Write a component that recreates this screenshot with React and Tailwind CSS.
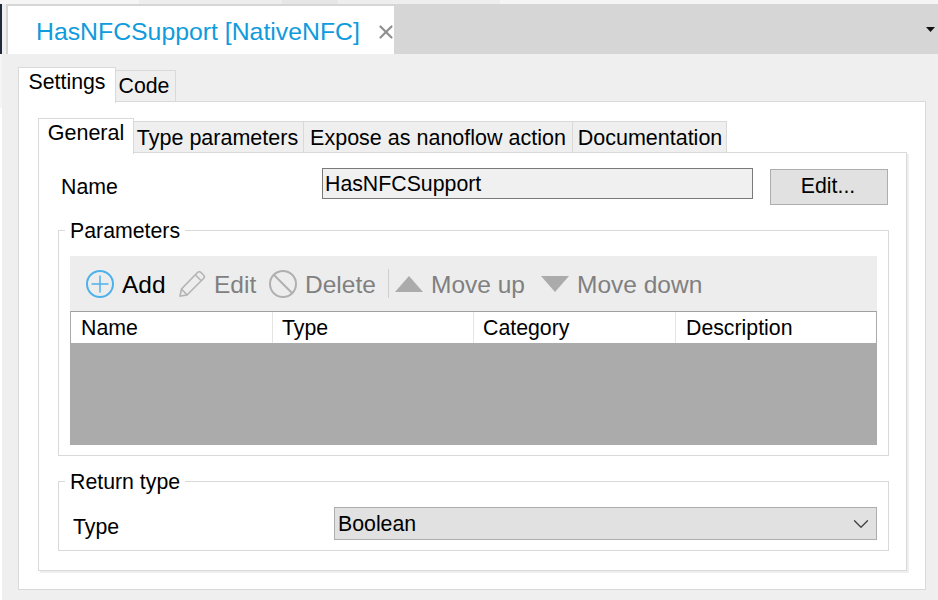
import React from 'react';
import { ChevronDown, X } from 'lucide-react';

const font = 'font-["Liberation_Sans",sans-serif]';

const innerTabs = [
  { label: 'Type parameters', w: 'w-[170px]', shift: 'pr-[2px]' },
  { label: 'Expose as nanoflow action', w: 'w-[269px]', shift: '' },
  { label: 'Documentation', w: 'w-[154px]', shift: 'pl-[1px]' },
];

const columns = [
  { label: 'Name', w: 'w-[202px]', pad: 'pl-[10px]' },
  { label: 'Type', w: 'w-[201px]', pad: 'pl-[9px]' },
  { label: 'Category', w: 'w-[202px]', pad: 'pl-[9px]' },
  { label: 'Description', w: 'flex-1', pad: 'pl-[10px]' },
];

const Tool = ({ icon, label, className = 'text-[#808080]' }) => (
  <div className={`flex items-center gap-[8px] ${className}`}>
    {icon}
    <span className="whitespace-nowrap pt-[3px]">{label}</span>
  </div>
);

const App = () => {
  return (
    <div className={`w-[938px] h-[600px] overflow-hidden bg-[#efefef] text-black ${font}`}>
      <div className="h-[4px] flex">
        <div className="w-[139px] bg-[#f5f5f5]" />
        <div className="w-[143px] bg-[#eeeeee]" />
        <div className="w-[56px] bg-[#e6e6e6]" />
        <div className="w-[162px] bg-[#eeeeee]" />
        <div className="flex-1 bg-[#f5f5f5]" />
      </div>

      {/* document tab strip */}
      <div className="h-[50px] flex bg-[#d6d6d6]">
        <div className="w-[2px] bg-[#1f2a3c]" />
        <div className="w-[4px] bg-[#f0f0f0]" />
        <div className="w-[2px]" />
        <div className="w-[386px] mt-[2px] bg-white flex items-center pl-[28px] pt-[3px] text-[#0f9bdc] text-[24.8px]">
          <span className="w-[324px] shrink-0 whitespace-nowrap">HasNFCSupport [NativeNFC]</span>
          <X className="ml-[15px] w-[22px] h-[22px] shrink-0 text-[#8f8f8f]" strokeWidth={2.4} />
        </div>
        <div className="flex-1 flex items-center justify-end pr-[3px]">
          <svg width="9" height="5" viewBox="0 0 9 5">
            <path d="M0 0h9L4.5 5z" fill="#111" />
          </svg>
        </div>
      </div>

      <div className="flex h-[546px]">
        <div className="w-[2px] flex flex-col">
          <div className="h-[54px] bg-[#f5f5f5]" />
          <div className="flex-1 bg-white" />
        </div>

        <div className="pl-[16px] pt-[12px]">
          {/* outer tabs */}
          <div className="flex items-end h-[36px] text-[21.3px]">
            <div className="w-[98px] h-[36px] bg-white border border-b-0 border-[#d9d9d9] relative z-10 -mb-px flex items-center justify-center pb-[6px]">
              Settings
            </div>
            <div className="w-[60px] h-[32px] bg-[#efefef] border border-l-0 border-[#d9d9d9] flex items-center justify-center pr-[3px] pt-[2px]">
              Code
            </div>
          </div>

          <div className="w-[908px] h-[489px] -mt-px bg-white border border-[#d9d9d9] pl-[19px] pt-[15px]">
            {/* inner tabs */}
            <div className="flex items-end h-[36px] text-[21.5px]">
              <div className="w-[96px] h-[36px] bg-white border border-b-0 border-[#d9d9d9] relative z-10 -mb-px flex items-center justify-center pb-[6px]">
                General
              </div>
              {innerTabs.map((tab) => (
                <div
                  key={tab.label}
                  className={`${tab.w} ${tab.shift} h-[32px] bg-[#efefef] border border-l-0 border-[#d9d9d9] flex items-center justify-center whitespace-nowrap pt-[2px]`}
                >
                  {tab.label}
                </div>
              ))}
            </div>

            <div className="w-[869px] h-[419px] -mt-px bg-white border border-[#d9d9d9] shadow-[2px_2px_0_#efefef] pl-[19px] pt-[15px] text-[21.3px]">
              {/* name row */}
              <div className="flex items-start h-[37px]">
                <div className="w-[264px] pl-[3px] pt-[4px]">Name</div>
                <div className="w-[431px] h-[31px] bg-[#f0f0f0] border border-[#7a7a7a] pl-[2px] pt-[2px] flex items-center">
                  HasNFCSupport
                </div>
                <div className="ml-[17px] mt-px w-[118px] h-[36px] bg-[#e1e1e1] border border-[#adadad] flex items-center justify-center pr-[2px]">
                  Edit...
                </div>
              </div>

              {/* parameters */}
              <fieldset className="w-[831px] h-[237px] mt-[14px] border border-[#d9d9d9] px-[11px]">
                <legend className="-ml-[5px] px-[5px] h-[22px] leading-[24px]">Parameters</legend>
                <div className="h-[55px] mt-[15px] bg-[#ededed] flex items-center pl-[16px] text-[24.5px]">
                  <div className="w-[92px]">
                    <Tool
                      className="text-black"
                      label="Add"
                      icon={
                        <svg width="28" height="28" viewBox="0 0 28 28" fill="none" stroke="#4db2ec" strokeWidth="2">
                          <circle cx="14" cy="14" r="13" />
                          <path d="M14 5.5v17M5.5 14h17" strokeWidth="1.5" />
                        </svg>
                      }
                    />
                  </div>
                  <div className="w-[91px]">
                    <Tool
                      label="Edit"
                      icon={
                        <svg width="28" height="28" viewBox="0 0 28 28" fill="none" stroke="#b4b4b4" strokeWidth="1.6">
                          <path d="M2 26l1.5-7L19.5 2.5c1-1 2.5-1 3.5 0l2.5 2.5c1 1 1 2.5 0 3.5L9 25z" />
                          <path d="M3.5 19L9 25M17.5 5l5.5 5.5" />
                        </svg>
                      }
                    />
                  </div>
                  <div className="w-[119px]">
                    <Tool
                      label="Delete"
                      icon={
                        <svg width="28" height="28" viewBox="0 0 28 28" fill="none" stroke="#b0b0b0" strokeWidth="2">
                          <circle cx="14" cy="14" r="13" />
                          <path d="M5 5l18 18" />
                        </svg>
                      }
                    />
                  </div>
                  <div className="w-px h-[29px] bg-[#cfcfcf] mr-[6px]" />
                  <div className="w-[146px]">
                    <Tool
                      label="Move up"
                      icon={
                        <svg width="28" height="16" viewBox="0 0 28 16">
                          <path d="M14 0l14 16H0z" fill="#ababab" />
                        </svg>
                      }
                    />
                  </div>
                  <Tool
                    label="Move down"
                    icon={
                      <svg width="28" height="16" viewBox="0 0 28 16">
                        <path d="M0 0h28L14 16z" fill="#ababab" />
                      </svg>
                    }
                  />
                </div>
                <div className="flex h-[32px] bg-white border-t border-x border-[#a0a0a0] border-x-[#ababab]">
                  {columns.map((col) => (
                    <div
                      key={col.label}
                      className={`${col.w} ${col.pad} pt-[2px] border-r last:border-r-0 border-[#e4e4e4] flex items-center`}
                    >
                      {col.label}
                    </div>
                  ))}
                </div>
                <div className="h-[102px] bg-[#ababab]" />
              </fieldset>

              {/* return type */}
              <fieldset className="w-[831px] h-[81px] mt-[14px] border border-[#d9d9d9] px-[11px]">
                <legend className="-ml-[5px] px-[5px] h-[22px] leading-[24px]">Return type</legend>
                <div className="flex items-start pt-[15px]">
                  <div className="w-[264px] pl-[3px] pt-[5px]">Type</div>
                  <div className="w-[543px] h-[33px] bg-[#e1e1e1] border border-[#adadad] pl-[3px] pr-[2px] flex items-center justify-between">
                    <span className="pt-[2px]">Boolean</span>
                    <ChevronDown className="w-[26px] h-[26px] text-[#404040]" strokeWidth={1.2} />
                  </div>
                </div>
              </fieldset>
            </div>
          </div>
        </div>
      </div>
    </div>
  );
};

export default App;
